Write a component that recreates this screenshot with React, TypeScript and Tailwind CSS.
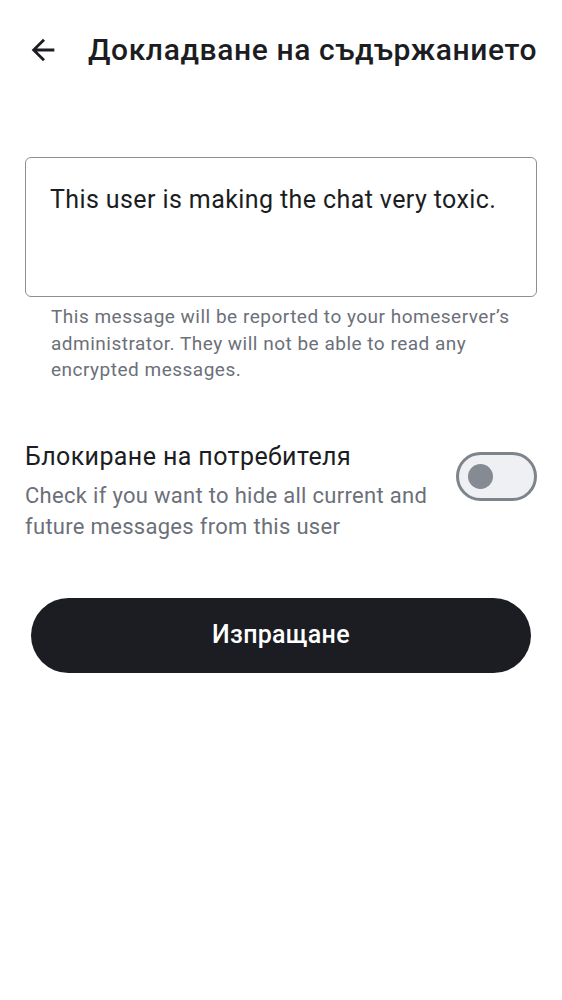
export default function App() {
  return (
    <div className="min-h-screen w-[562px] bg-white font-['Roboto',sans-serif] text-[#1b1d22]">
      {/* Top bar */}
      <div className="flex h-[100px] items-center pl-[26px]">
        <svg width="34" height="34" viewBox="0 0 24 24" className="shrink-0 text-[#1b1d22]">
          <path d="M20 11H7.83l5.59-5.59L12 4l-8 8 8 8 1.41-1.41L7.83 13H20v-2z" fill="currentColor" />
        </svg>
        <h1 className="ml-[28px] whitespace-nowrap text-[30px] font-medium leading-none tracking-[0.6px]">
          Докладване на съдържанието
        </h1>
      </div>

      {/* Reason field */}
      <div className="mt-[57px] px-[25px]">
        <div className="h-[140px] rounded-[6px] border-[1.5px] border-[#8a8f97] px-[24px] pt-[26px]">
          <p className="text-[25px] leading-[32px] tracking-[0.4px] text-[#1b1d22]">
            This user is making the chat very toxic.
          </p>
        </div>
        <p className="mt-[7px] pl-[26px] pr-[20px] text-[19px] leading-[26.5px] tracking-[0.5px] text-[#6b7079]">
          This message will be reported to your homeserver’s administrator. They will not be able to read any encrypted messages.
        </p>
      </div>

      {/* Block user */}
      <div className="mt-[57px] flex items-start justify-between px-[25px]">
        <div className="w-[410px]">
          <p className="text-[25px] leading-[32px] tracking-[0.4px] text-[#1b1d22]">Блокиране на потребителя</p>
          <p className="mt-[7px] text-[22px] leading-[31px] tracking-[0.3px] text-[#6b7079]">
            Check if you want to hide all current and future messages from this user
          </p>
        </div>
        <div className="mt-[11px] flex h-[49px] w-[81px] shrink-0 items-center rounded-full border-[3px] border-[#7e848c] bg-[#eef0f3] pl-[9px]">
          <div className="h-[25px] w-[25px] rounded-full bg-[#858a93]" />
        </div>
      </div>

      {/* Send button */}
      <div className="mt-[56px] px-[31px]">
        <button className="flex h-[75px] w-full items-center justify-center rounded-full bg-[#1b1d22] text-[25px] font-medium tracking-[0.3px] text-white">
          Изпращане
        </button>
      </div>
    </div>
  );
}
